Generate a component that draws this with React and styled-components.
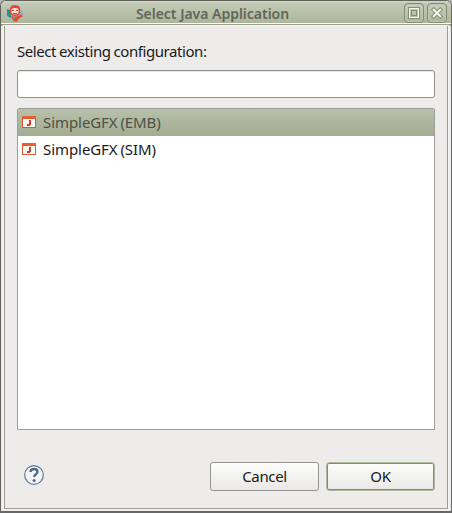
import React from "react";
import styled, { createGlobalStyle } from "styled-components";

const GlobalStyle = createGlobalStyle`
  * { box-sizing: border-box; }
  body { margin: 0; background: #b4b4b4; overflow: hidden; }
`;

const Dialog = styled.main`
  width: 452px;
  height: 513px;
  display: flex;
  flex-direction: column;
  border: 1px solid #62635a;
  border-bottom-width: 2px;
  border-right-color: #686868;
  border-bottom-color: #686868;
  border-radius: 6px 6px 0 0;
  background: #edecea;
  font: 15px/20px "Noto Sans", sans-serif;
  color: #1a1a1a;
  overflow: hidden;
`;

const TitleBar = styled.header`
  flex: 0 0 25px;
  display: flex;
  align-items: center;
  padding: 0 4px 2px 5px;
  background: linear-gradient(#d5dac9 0, #c3cab6 2px, #adb69d 22px, #fafaf5 22px, #fafaf5 23px, #949982 23px, #adb09e 25px);
`;

const Title = styled.h1`
  flex: 1;
  margin: 2px 0 0 -3px;
  font-size: 14px;
  line-height: 20px;
  font-weight: 600;
  letter-spacing: -0.02px;
  text-align: center;
  white-space: nowrap;
  color: #62665a;
`;

const WindowControls = styled.div`
  display: flex;
  gap: 3px;
`;

const WindowButton = styled.button`
  display: grid;
  place-items: center;
  width: 20px;
  height: 20px;
  padding: 0;
  border: 1px solid #818b70;
  border-radius: 4px;
  background: linear-gradient(#c9d0bc, #adb69d);
  box-shadow: inset 0 0 0 1px #bfc6b1;
`;

const Content = styled.section`
  flex: 1;
  display: flex;
  flex-direction: column;
  margin: 0 3px 2px;
  padding: 15px 12px 0;
  border: 1px solid #9a9a97;
  border-top: 0;
  box-shadow: 0 0 0 1px #f5f5f3;
`;

const Label = styled.label`
  height: 21px;
  letter-spacing: -0.43px;
  word-spacing: -0.5px;
  white-space: nowrap;
`;

const TextField = styled.input`
  flex: 0 0 28px;
  width: 418px;
  margin-top: 8px;
  padding: 0 6px;
  border: 1px solid #8f8f8e;
  border-radius: 3px;
  outline: 0;
  background: white;
  box-shadow: inset 0 1px 1px #e8e8e8;
  font: inherit;
`;

const List = styled.ul`
  width: 418px;
  height: 322px;
  margin: 10px 0 0;
  padding: 0;
  border: 1px solid #9d9d9b;
  border-radius: 2px 2px 0 0;
  background: white;
  list-style: none;
`;

const ListItem = styled.li`
  display: flex;
  align-items: center;
  gap: 7px;
  height: 27px;
  padding: 0 0 2px 4px;
  letter-spacing: -0.07px;
  word-spacing: -1px;
  color: ${({ $selected }) => ($selected ? "#4d5145" : "#1a1a1a")};
  background: ${({ $selected }) => ($selected ? "linear-gradient(#b8c1a9, #a3ab92)" : "white")};
`;

const Footer = styled.footer`
  display: flex;
  align-items: center;
  margin-top: 32px;
  padding-left: 6px;
  height: 29px;
`;

const HelpButton = styled.button`
  display: grid;
  padding: 0;
  margin: -4px auto 0 1px;
  border: 0;
  background: transparent;
`;

const ActionButton = styled.button`
  width: 109px;
  height: 29px;
  margin-left: 7px;
  padding: 0 0 2px;
  border: 1px solid ${({ $primary }) => ($primary ? "#b0bba0" : "#949492")};
  border-radius: 3px;
  background: linear-gradient(#fdfdfd, #e9e8e6);
  box-shadow: ${({ $primary }) => ($primary ? "inset 0 0 0 1px #7b9650" : "inset 0 1px 0 #fff")};
  color: #1a1a1a;
  font: 15px/20px "Noto Sans", sans-serif;
  letter-spacing: -0.35px;
`;

const AppIcon = () => (
  <svg width="18" height="18" viewBox="0 0 18 18">
    <path d="M1 5l4 1v8l-4-2z" fill="#278fa0" />
    <path d="M13 3l4 5v3h-4z" fill="#aaa9b3" />
    <path d="M4 4Q5 1 9 1t5 3v5q-1 3-5 3T4 9z" fill="#e04b30" />
    <path d="M5.5 5q3.5-2 7 0v4q-3.5 3-7 0z" fill="#fbe3da" />
    <path d="M6 6.5h2M10 6.5h2M7 9.5h4" stroke="#c94a38" />
    <path d="M5 12l3 .5h3l4-2 2 1.5-4 2.5-2 3H8l-2-3z" fill="#e04b30" />
    <path d="M7 13h2v2H7z" fill="#51a3ae" />
  </svg>
);

const MaximizeIcon = () => (
  <svg width="12" height="12" viewBox="0 0 12 12" fill="none" shapeRendering="crispEdges">
    <path d="M.5 .5h11v11H.5zM3.5 3.5h5v5h-5z" stroke="#858d76" />
    <path d="M1.5 1.5h9v9h-9z" stroke="#f7f8f0" />
  </svg>
);

const CloseIcon = () => (
  <svg width="12" height="12" viewBox="0 0 12 12" strokeLinecap="square">
    <path d="M2.7 2.7l6.6 6.6M9.3 2.7L2.7 9.3" stroke="#828a73" strokeWidth="4" />
    <path d="M2.7 2.7l6.6 6.6M9.3 2.7L2.7 9.3" stroke="#f7f8f0" strokeWidth="2" />
  </svg>
);

const JavaApplicationIcon = () => (
  <svg width="14" height="12" viewBox="0 0 14 12" shapeRendering="crispEdges">
    <path d="M0 0h14v12H0z" fill="#d65a36" />
    <path d="M1 3h12v8H1z" fill="#fffaf5" />
    <path d="M0 0h14v2H0z" fill="#f0602f" />
    <path d="M7 4h2v5H8v1H5V8h2z" fill="#cf3b20" />
  </svg>
);

const HelpIcon = () => (
  <svg width="20" height="20" viewBox="0 0 20 20" fill="none">
    <circle cx="10" cy="10" r="9.3" fill="#f3f4f5" stroke="#637897" strokeWidth="1.2" />
    <path d="M6.5 7q0-3 3.7-3 3.3 0 3.3 2.8 0 1.5-1.8 2.6-1.5.9-1.5 2.6" stroke="#506788" strokeWidth="2.3" />
    <circle cx="10.1" cy="15.4" r="1.5" fill="#506788" />
  </svg>
);

const configurations = ["SimpleGFX (EMB)", "SimpleGFX (SIM)"];

export default function App() {
  return (
    <>
      <GlobalStyle />
      <Dialog>
        <TitleBar>
          <AppIcon />
          <Title>Select Java Application</Title>
          <WindowControls>
            <WindowButton aria-label="Maximize"><MaximizeIcon /></WindowButton>
            <WindowButton aria-label="Close"><CloseIcon /></WindowButton>
          </WindowControls>
        </TitleBar>
        <Content>
          <Label htmlFor="filter">Select existing configuration:</Label>
          <TextField id="filter" />
          <List>
            {configurations.map((name, index) => (
              <ListItem key={name} $selected={index === 0}>
                <JavaApplicationIcon />
                <span>{name}</span>
              </ListItem>
            ))}
          </List>
          <Footer>
            <HelpButton aria-label="Help"><HelpIcon /></HelpButton>
            <ActionButton>Cancel</ActionButton>
            <ActionButton $primary>OK</ActionButton>
          </Footer>
        </Content>
      </Dialog>
    </>
  );
}
